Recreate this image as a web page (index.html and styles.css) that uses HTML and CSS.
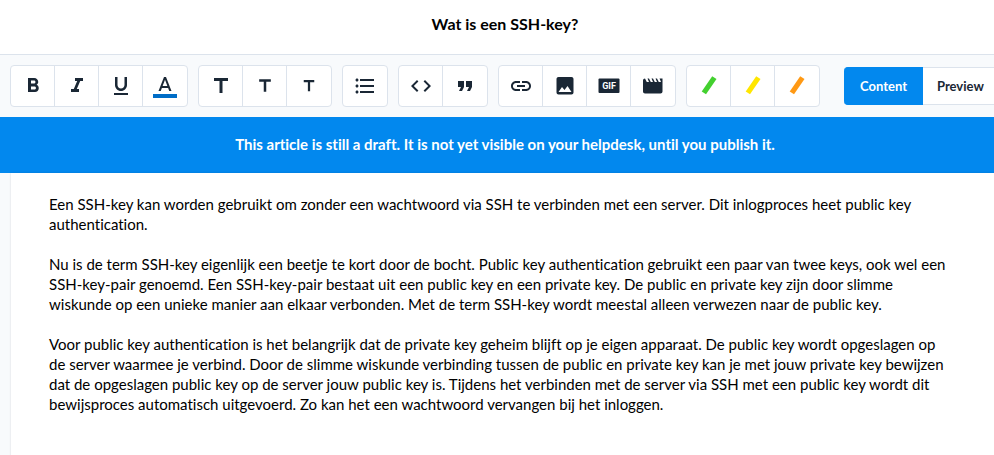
FILE: index.html
```html
<!DOCTYPE html>
<html lang="nl">

<head>
    <meta charset="UTF-8">
    <meta name="viewport" content="width=device-width, initial-scale=1.0">
    <title>Wat is een SSH-key?</title>
    <link rel="stylesheet" href="styles.css">
</head>

<body>
    <header class="title-bar">
        <h1>Wat is een SSH-key?</h1>
    </header>

    <div class="toolbar" role="toolbar" aria-label="Formatting">
        <div class="button-group">
            <button type="button" aria-label="Bold">
                <svg class="icon" viewBox="0 0 24 24"><path d="M15.600 10.790c.97-.67 1.650-1.770 1.650-2.790 0-2.260-1.750-4-4-4H7v14h7.040c2.090 0 3.710-1.700 3.710-3.790 0-1.520-.86-2.820-2.150-3.420zM10 6.500h3c.83 0 1.500.67 1.500 1.500s-.67 1.500-1.500 1.500h-3v-3zm3.500 9H10v-3h3.500c.83 0 1.500.67 1.500 1.500s-.67 1.500-1.500 1.500z"/></svg>
            </button>
            <button type="button" aria-label="Italic">
                <svg class="icon" viewBox="0 0 24 24"><path d="M10 4v3h2.210l-3.420 8H6v3h8v-3h-2.210l3.420-8H18V4z"/></svg>
            </button>
            <button type="button" aria-label="Underline">
                <svg class="icon" viewBox="0 0 24 24"><path d="M12 17c3.310 0 6-2.690 6-6V3h-2.500v8c0 1.930-1.570 3.500-3.500 3.500S8.500 12.930 8.500 11V3H6v8c0 3.310 2.690 6 6 6zm-7 2v2h14v-2H5z"/></svg>
            </button>
            <button type="button" aria-label="Text color">
                <svg class="icon" viewBox="0 0 24 24"><path class="color-bar" d="M0 20h24v4H0z"/><path d="M11 3L5.500 17h2.250l1.120-3h6.250l1.120 3h2.250L13 3h-2zm-1.380 9L12 5.670 14.380 12H9.620z"/></svg>
            </button>
        </div>

        <div class="button-group">
            <button type="button" aria-label="Large text">
                <svg class="icon" viewBox="0 0 24 24"><path d="M5 4v3h5.500v12h3V7H19V4z"/></svg>
            </button>
            <button type="button" aria-label="Medium text">
                <svg class="icon icon-medium" viewBox="0 0 24 24"><path d="M5 4v3h5.500v12h3V7H19V4z"/></svg>
            </button>
            <button type="button" aria-label="Small text">
                <svg class="icon icon-small" viewBox="0 0 24 24"><path d="M5 4v3h5.500v12h3V7H19V4z"/></svg>
            </button>
        </div>

        <div class="button-group">
            <button type="button" aria-label="Bulleted list">
                <svg class="icon" viewBox="0 0 24 24"><path d="M4 10.500c-.83 0-1.500.67-1.500 1.500s.67 1.500 1.500 1.500 1.500-.67 1.500-1.500-.67-1.500-1.500-1.500zm0-6c-.83 0-1.500.67-1.500 1.500S3.170 7.500 4 7.500 5.500 6.830 5.500 6 4.830 4.500 4 4.500zm0 12c-.83 0-1.500.68-1.500 1.500s.68 1.500 1.500 1.500 1.500-.68 1.500-1.500-.67-1.500-1.500-1.500zM7 19h14v-2H7v2zm0-6h14v-2H7v2zm0-8v2h14V5H7z"/></svg>
            </button>
        </div>

        <div class="button-group">
            <button type="button" aria-label="Code">
                <svg class="icon" viewBox="0 0 24 24"><path d="M9.400 16.600L4.800 12l4.600-4.600L8 6l-6 6 6 6 1.400-1.400zm5.200 0l4.600-4.600-4.600-4.600L16 6l6 6-6 6-1.400-1.400z"/></svg>
            </button>
            <button type="button" aria-label="Quote">
                <svg class="icon" viewBox="0 0 24 24"><path d="M6 17h3l2-4V7H5v6h3zm8 0h3l2-4V7h-6v6h3z"/></svg>
            </button>
        </div>

        <div class="button-group">
            <button type="button" aria-label="Link">
                <svg class="icon" viewBox="0 0 24 24"><path d="M3.900 12c0-1.710 1.390-3.100 3.100-3.100h4V7H7c-2.760 0-5 2.240-5 5s2.240 5 5 5h4v-1.900H7c-1.710 0-3.100-1.390-3.100-3.100zM8 13h8v-2H8v2zm9-6h-4v1.900h4c1.710 0 3.100 1.390 3.100 3.100s-1.390 3.100-3.100 3.100h-4V17h4c2.760 0 5-2.240 5-5s-2.240-5-5-5z"/></svg>
            </button>
            <button type="button" aria-label="Image">
                <svg class="icon" viewBox="0 0 24 24"><path d="M20.500 18.500V5c0-1.100-.9-2-2-2H5.500c-1.100 0-2 .9-2 2v13.500c0 1.100.9 2 2 2h13c1.100 0 2-.9 2-2zM9 13l2.500 3 3-4 4 6H5.500z"/></svg>
            </button>
            <button type="button" aria-label="GIF">
                <svg class="icon" viewBox="0 0 24 24"><rect x="1.500" y="4.500" width="21" height="14.500" rx="1"/><text class="gif-label" x="12" y="15" text-anchor="middle">GIF</text></svg>
            </button>
            <button type="button" aria-label="Video">
                <svg class="icon" viewBox="0 0 24 24"><path d="M18.500 4.500L20 8h-2.200L16 4.500h-1.500L16 8h-2.200L12 4.500h-1.500L12 8H9.800L8 4.500H6.500L8 8H5.800L4 4.500c-1.100 0-2 .9-2 2v11c0 1.100.9 2 2 2h15.500c1.100 0 2-.9 2-2v-13z"/></svg>
            </button>
        </div>

        <div class="button-group">
            <button type="button" aria-label="Green callout">
                <svg class="icon marker-green" viewBox="0 0 24 24"><path d="M15.200 2.300l4.300 2.800L9 20.300l-4.300-2.900z"/></svg>
            </button>
            <button type="button" aria-label="Yellow callout">
                <svg class="icon marker-yellow" viewBox="0 0 24 24"><path d="M15.200 2.300l4.300 2.800L9 20.300l-4.300-2.900z"/></svg>
            </button>
            <button type="button" aria-label="Orange callout">
                <svg class="icon marker-orange" viewBox="0 0 24 24"><path d="M15.200 2.300l4.300 2.800L9 20.300l-4.300-2.900z"/></svg>
            </button>
        </div>

        <div class="view-switch">
            <button type="button" class="active">Content</button>
            <button type="button">Preview</button>
        </div>
    </div>

    <div class="draft-banner">This article is still a draft. It is not yet visible on your helpdesk, until you publish it.</div>

    <main class="editor">
        <article class="article">
            <p>Een SSH-key kan worden gebruikt om zonder een wachtwoord via SSH te verbinden met een server. Dit inlogproces heet public key authentication.</p>
            <p>Nu is de term SSH-key eigenlijk een beetje te kort door de bocht. Public key authentication gebruikt een paar van twee keys, ook wel een SSH-key-pair genoemd. Een SSH-key-pair bestaat uit een public key en een private key. De public en private key zijn door slimme wiskunde op een unieke manier aan elkaar verbonden. Met de term SSH-key wordt meestal alleen verwezen naar de public key.</p>
            <p>Voor public key authentication is het belangrijk dat de private key geheim blijft op je eigen apparaat. De public key wordt opgeslagen op de server waarmee je verbind. Door de slimme wiskunde verbinding tussen de public en private key kan je met jouw private key bewijzen dat de opgeslagen public key op de server jouw public key is. Tijdens het verbinden met de server via SSH met een public key wordt dit bewijsproces automatisch uitgevoerd. Zo kan het een wachtwoord vervangen bij het inloggen.</p>
        </article>
    </main>
</body>

</html>
```
FILE: styles.css
```css
* {
    box-sizing: border-box;
}

body {
    display: flex;
    flex-direction: column;
    min-height: 100vh;
    margin: 0;
    overflow: hidden;
    font-family: Lato, "Liberation Sans", sans-serif;
    font-size: 15px;
    font-variant-ligatures: none;
    line-height: 20px;
    color: #000;
    background-color: #f8fafc;
}

.title-bar {
    padding: 14px 0 20px 16px;
    border-bottom: 1px solid #dce3ec;
    background-color: #fff;
    text-align: center;
}

h1 {
    margin: 0;
    font-size: 16px;
    font-weight: bold;
}

.toolbar {
    display: flex;
    align-items: center;
    gap: 10px;
    padding: 10px;
}

.button-group {
    display: flex;
    flex-shrink: 0;
    border: 1px solid #dce3ec;
    border-radius: 4px;
    background-color: #fff;
}

.button-group button {
    display: flex;
    align-items: center;
    justify-content: center;
    width: 44px;
    height: 40px;
    padding: 0;
    border: none;
    border-right: 1px solid #dce3ec;
    background: none;
    cursor: pointer;
}

.button-group button:last-child {
    border-right: none;
}

.icon {
    width: 24px;
    height: 24px;
    fill: #1a2735;
}

.icon-medium {
    width: 20px;
    height: 20px;
}

.icon-small {
    width: 18px;
    height: 18px;
}

.color-bar {
    fill: #006dc7;
}

.gif-label {
    font-family: Roboto, sans-serif;
    font-size: 9px;
    font-weight: bold;
    fill: #fff;
}

.marker-green {
    fill: #43d02f;
}

.marker-yellow {
    fill: #ffe600;
}

.marker-orange {
    fill: #ff9914;
}

.view-switch {
    display: flex;
    flex-shrink: 0;
    margin-left: 14px;
}

.view-switch button {
    height: 38px;
    padding: 0 14px;
    border: 1px solid #dce3ec;
    border-left: none;
    border-radius: 0 4px 4px 0;
    background-color: #fff;
    font-family: inherit;
    font-size: 13px;
    font-weight: bold;
    color: #1a2735;
    cursor: pointer;
}

.view-switch .active {
    padding: 0 15px 0 16px;
    border-color: #0288ee;
    border-radius: 4px 0 0 4px;
    background-color: #0288ee;
    color: #fff;
}

.draft-banner {
    padding: 17px 0 19px 16px;
    background-color: #0288ee;
    color: #fff;
    font-weight: bold;
    text-align: center;
}

.editor {
    display: flex;
    flex: 1;
    padding-left: 11px;
}

.article {
    flex: 1;
    padding: 21px 40px 40px 38px;
    background-color: #fff;
    box-shadow: 0 0 2px rgba(26, 39, 53, 0.15);
}

.article p {
    margin: 0 0 20px;
}
```
